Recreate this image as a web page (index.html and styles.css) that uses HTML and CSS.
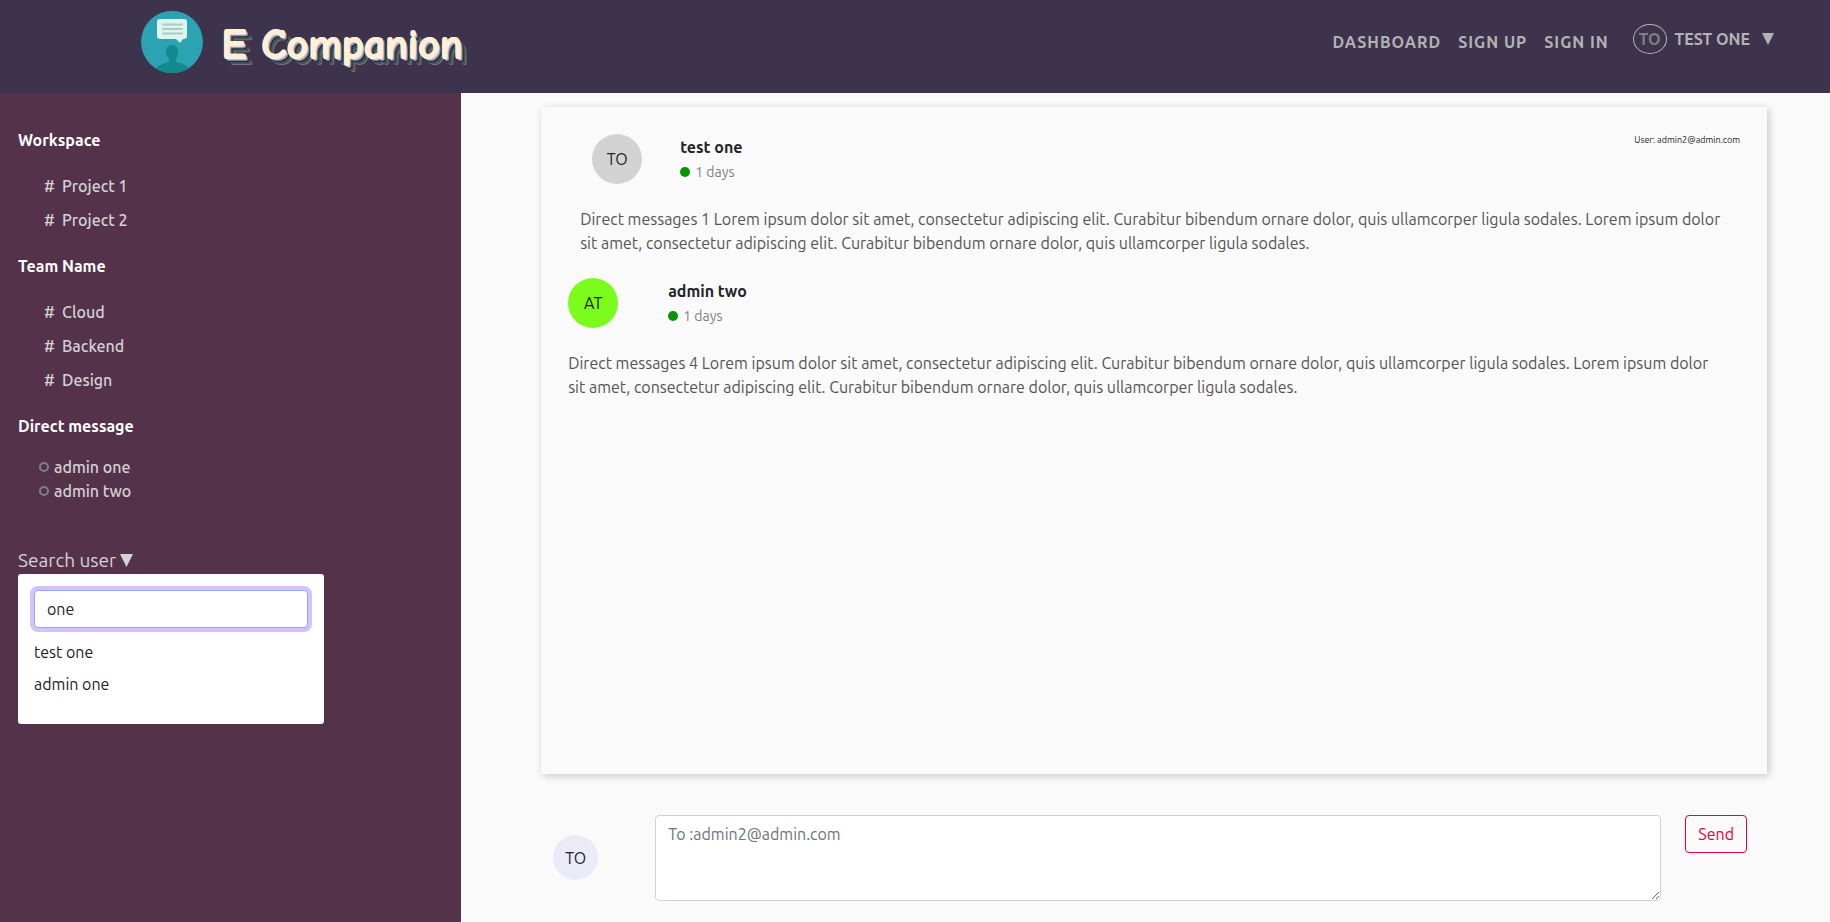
FILE: index.html
```html
<!DOCTYPE html>
<html lang="en">
<head>
<meta charset="utf-8">
<title>E Companion</title>
<link rel="stylesheet" href="styles.css">
</head>
<body>
<header class="topbar">
  <a class="brand" href="#">
    <svg class="brand-logo" viewBox="0 0 62 62" aria-hidden="true">
      <defs><clipPath id="disc"><circle cx="31" cy="31" r="31"/></clipPath></defs>
      <circle cx="31" cy="31" r="31" fill="#2ba3b2"/>
      <g clip-path="url(#disc)" fill="#12898c">
        <path d="M31 34c-4 0-6 3-6 7 0 3 2 5 3 7v4h7v-4c1-2 2-4 2-7 0-4-2-7-6-7z"/>
        <path d="M13 62c1-7 7-9 15-11h7c8 2 14 4 15 11z"/>
      </g>
      <path d="M19 8h24a3 3 0 0 1 3 3v14a3 3 0 0 1-3 3h-1l-3 4-4-4H19a3 3 0 0 1-3-3V11a3 3 0 0 1 3-3z" fill="#def3ec"/>
      <path d="M22 13.500h19M22 18h19M22 22.500h19" stroke="#abccc4" stroke-width="2" stroke-linecap="round"/>
    </svg>
    <span class="brand-name">E Companion</span>
  </a>
  <nav class="nav">
    <a href="#">DASHBOARD</a>
    <a href="#">SIGN UP</a>
    <a href="#">SIGN IN</a>
  </nav>
  <button class="account" type="button">
    <span class="account-badge">TO</span>
    <span>TEST ONE</span>
    <svg class="caret" viewBox="0 0 12 12" aria-hidden="true"><path d="M0 0h12L6 12z"/></svg>
  </button>
</header>
<div class="layout">
  <aside class="sidebar">
    <h2>Workspace</h2>
    <ul class="channels">
      <li><a href="#"><span>#</span>Project 1</a></li>
      <li><a href="#"><span>#</span>Project 2</a></li>
    </ul>
    <h2>Team Name</h2>
    <ul class="channels">
      <li><a href="#"><span>#</span>Cloud</a></li>
      <li><a href="#"><span>#</span>Backend</a></li>
      <li><a href="#"><span>#</span>Design</a></li>
    </ul>
    <h2>Direct message</h2>
    <ul class="people">
      <li><a href="#">admin one</a></li>
      <li><a href="#">admin two</a></li>
    </ul>
    <label class="search-label" for="search">Search user<svg class="search-caret" viewBox="0 0 12 12" aria-hidden="true"><path d="M0 0h12L6 12z"/></svg></label>
    <div class="search-panel">
      <input id="search" type="text" value="one">
      <ul>
        <li>test one</li>
        <li>admin one</li>
      </ul>
    </div>
  </aside>
  <main class="main">
    <section class="thread">
      <article class="message message-inset">
        <div class="message-head">
          <span class="avatar avatar-grey">TO</span>
          <div>
            <h3>test one</h3>
            <p class="status">1 days</p>
          </div>
          <p class="recipient">User: admin2@admin.com</p>
        </div>
        <p class="message-body">Direct messages 1 Lorem ipsum dolor sit amet, consectetur adipiscing elit. Curabitur bibendum ornare dolor, quis ullamcorper ligula sodales. Lorem ipsum dolor sit amet, consectetur adipiscing elit. Curabitur bibendum ornare dolor, quis ullamcorper ligula sodales.</p>
      </article>
      <article class="message message-wide">
        <div class="message-head">
          <span class="avatar avatar-green">AT</span>
          <div>
            <h3>admin two</h3>
            <p class="status">1 days</p>
          </div>
        </div>
        <p class="message-body">Direct messages 4 Lorem ipsum dolor sit amet, consectetur adipiscing elit. Curabitur bibendum ornare dolor, quis ullamcorper ligula sodales. Lorem ipsum dolor sit amet, consectetur adipiscing elit. Curabitur bibendum ornare dolor, quis ullamcorper ligula sodales.</p>
      </article>
    </section>
    <form class="composer">
      <span class="avatar avatar-small">TO</span>
      <textarea aria-label="Message" rows="3" placeholder="To :admin2@admin.com"></textarea>
      <button class="send" type="button">Send</button>
    </form>
  </main>
</div>
</body>
</html>
```

FILE: styles.css
```css
*, *::before { box-sizing: border-box; }
body {
  margin: 0;
  min-height: 100vh;
  display: flex;
  flex-direction: column;
  background: #fafafa;
  color: #212529;
  font: 16px/24px Ubuntu, "Noto Sans", sans-serif;
}
h2, h3, p, ul { margin: 0; padding: 0; }
h2, h3 { font-size: 16px; line-height: 24px; font-weight: 700; }
ul { list-style: none; }
a { color: inherit; text-decoration: none; }
input, textarea, button { font: inherit; color: inherit; }

.topbar {
  display: flex;
  align-items: flex-start;
  height: 93px;
  padding: 11px 56px 0 141px;
  background: #3d334d;
  color: #b3b3b3;
}
.brand { display: flex; gap: 18px; margin-right: auto; }
.brand-logo { width: 62px; height: 62px; }
.brand-name {
  font: italic 900 42px/68px "Comic Sans MS", "Comic Neue", Lato, sans-serif;
  font-style: normal;
  color: #ffefd5;
  text-shadow: 1px 0 #ffefd5, 0 1px #ffefd5, 1px 1px #ffefd5, 2px 2px #c8c0d0, 3px 3px #8080b8, 4px 4px #0f2c3a, 5px 5px #47544c, 6px 6px #47544c, 7px 7px #77707a;
}
.nav { display: flex; gap: 17px; padding-top: 19px; font-weight: 700; letter-spacing: 1px; }
.account {
  display: flex;
  align-items: center;
  gap: 8px;
  margin: 13px 0 0 24px;
  padding: 0;
  border: 0;
  background: none;
  font-weight: 700;
}
.account-badge {
  padding: 2px 5px;
  border: 1px solid #b3b3b3;
  border-radius: 50%;
  color: #808080;
}
.caret { width: 12px; height: 12px; margin-left: 4px; fill: currentColor; }

.layout { flex: 1; display: flex; }
.sidebar {
  flex: 0 0 25.2%;
  padding: 35px 18px;
  background: #53324a;
  color: #d3d3d3;
}
.sidebar h2 { color: #fff; }
.channels { padding: 17px 0 17px 26px; font-weight: 500; }
.channels li { padding: 5px 0; }
.channels span { display: inline-block; width: 18px; }
.people { padding: 17px 0 0 21px; font-weight: 500; }
.people a { display: flex; align-items: center; gap: 5px; }
.people a::before {
  content: "";
  width: 10px;
  height: 10px;
  border: 2px solid #808080;
  border-radius: 50%;
}
.search-label { display: flex; align-items: center; gap: 4px; margin-top: 44px; font-size: 19px; line-height: 27px; }
.search-caret { width: 13px; height: 13px; fill: currentColor; }
.search-panel {
  width: 306px;
  max-width: 100%;
  min-height: 150px;
  padding: 16px;
  border-radius: 3px;
  background: #fff;
  color: #212529;
}
.search-panel input {
  width: 100%;
  height: 38px;
  padding: 6px 12px;
  border: 1px solid #8fa8f8;
  border-radius: 4px;
  outline: 0;
  box-shadow: 0 0 0 4px #d2c2fe;
}
.search-panel ul { padding-top: 8px; }
.search-panel li { padding: 4px 0; }

.main { flex: 1; min-width: 0; padding: 14px 63px 20px 80px; }
.thread {
  min-height: 667px;
  padding: 27px;
  box-shadow: 2px 2px 8px rgba(0, 0, 0, 0.2);
}
.message-inset { padding: 0 0 23px 12px; }
.message-wide { padding-right: 16px; }
.message-head { display: flex; align-items: flex-start; gap: 50px; }
.message-inset .message-head { padding-left: 12px; gap: 38px; }
.avatar {
  display: grid;
  place-items: center;
  width: 50px;
  height: 50px;
  border-radius: 50%;
}
.avatar-grey { background: #d3d3d3; }
.avatar-green { background: #7cfc1c; }
.avatar-small { width: 45px; height: 45px; background: #ebebf8; }
.message h3 { padding-top: 1px; }
.status { display: flex; align-items: center; gap: 5px; padding-top: 1px; color: #808080; font-size: 14px; }
.status::before {
  content: "";
  width: 10px;
  height: 10px;
  border-radius: 50%;
  background: #069406;
}
.recipient { margin-left: auto; font-size: 9px; line-height: 13px; }
.message-body { margin-top: 23px; color: #555; }
.composer {
  display: flex;
  align-items: flex-start;
  margin-top: 41px;
  padding: 0 20px 0 12px;
}
.composer .avatar { margin: 20px 57px 0 0; }
.composer textarea {
  flex: 1;
  height: 86px;
  padding: 6px 12px;
  border: 1px solid #ced4da;
  border-radius: 4px;
  background: #fff;
}
.composer textarea::placeholder { color: #6c757d; }
.send {
  margin-left: 24px;
  height: 38px;
  padding: 6px 12px;
  border: 1px solid #e6003f;
  border-radius: 4px;
  background: none;
  color: #e6003f;
}
```
